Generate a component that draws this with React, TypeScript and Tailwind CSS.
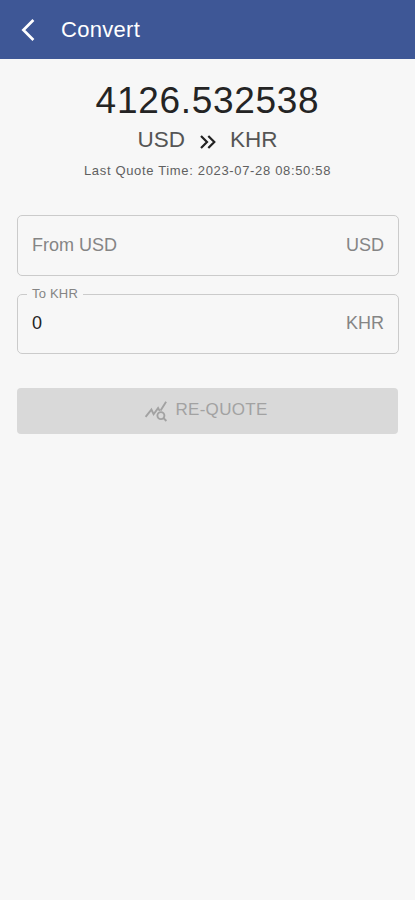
function BackIcon() {
  return (
    <svg className="h-[24px] w-[16px]" viewBox="0 0 16 24" fill="none" stroke="currentColor" strokeWidth="2.7">
      <path d="M13.4 2 3.4 12l10 10" />
    </svg>
  );
}

function DoubleArrowIcon() {
  return (
    <svg className="mt-[4px] h-[16px] w-[18px]" viewBox="0 0 18 16" fill="none" stroke="currentColor" strokeWidth="2.2">
      <path d="m2 2 6 6-6 6M9.3 2l6 6-6 6" />
    </svg>
  );
}

function QueryStatsIcon() {
  return (
    <svg className="mt-[2px] h-[22px] w-[24px]" viewBox="0 0 24 22" fill="none" stroke="currentColor" strokeWidth="1.9">
      <path d="m1.6 16.8 5.8-7.2 2.2 4.6 4.5-6.1 1.6 2.8M16.6 10.6l5.5-8.8" />
      <circle cx="16.9" cy="15.6" r="3.5" />
      <path d="m19.4 18 3 3" />
    </svg>
  );
}

export default function App() {
  return (
    <div className="flex min-h-[900px] w-full flex-col bg-[#f7f7f7] font-['Liberation_Sans',Arial,sans-serif] text-[#242424]">
      <header className="flex h-[59px] items-center bg-[#3e5796] pl-[20px] pt-px text-white">
        <BackIcon />
        <h1 className="-mt-px ml-[25px] text-[22px] leading-none tracking-[0.3px]">Convert</h1>
      </header>
      <main className="flex flex-col px-[17px]">
        <section className="flex flex-col items-center pt-[22px]">
          <div className="text-[37px] leading-[40px] tracking-[0.7px]">4126.532538</div>
          <div className="mt-[5px] flex h-[28px] items-center text-[22.5px] text-[#555]">
            <span>USD</span>
            <span className="ml-[14px] mr-[13px] text-[#222]">
              <DoubleArrowIcon />
            </span>
            <span>KHR</span>
          </div>
          <div className="mt-[8px] text-[13px] leading-[18px] tracking-[0.66px] text-[#606060]">
            Last Quote Time: 2023-07-28 08:50:58
          </div>
        </section>
        <div className="mt-[35px] flex h-[61px] w-[382px] items-center justify-between rounded-[5px] border border-[#cbcbcb] pl-[14px] pr-[14px] text-[18px] text-[#858585]">
          <span>From USD</span>
          <span>USD</span>
        </div>
        <fieldset className="mt-[10px] h-[68px] w-[382px] rounded-[5px] border border-[#cbcbcb] px-[9px]">
          <legend className="px-[5px] text-[13px] leading-[16px] tracking-[0.2px] text-[#858585]">To KHR</legend>
          <div className="flex h-[43px] items-center justify-between px-[5px] text-[18px]">
            <span>0</span>
            <span className="text-[#858585]">KHR</span>
          </div>
        </fieldset>
        <button className="mt-[34px] flex h-[46px] items-center justify-center gap-[7px] rounded-[4px] bg-[#d9d9d9] pb-[2px] pr-[3px] text-[17px] tracking-[0.3px] text-[#a2a2a2]">
          <QueryStatsIcon />
          <span>RE-QUOTE</span>
        </button>
      </main>
    </div>
  );
}
